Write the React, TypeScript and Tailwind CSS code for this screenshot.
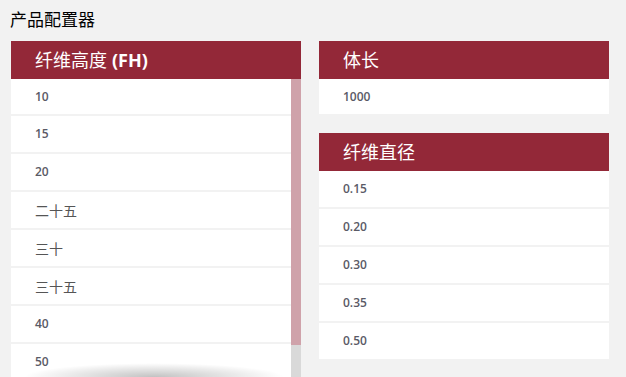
const heights = ["10", "15", "20", "二十五", "三十", "三十五", "40", "50"];
const lengths = ["1000"];
const diameters = ["0.15", "0.20", "0.30", "0.35", "0.50"];

const isCjk = (s: string) => /[\u4e00-\u9fff]/.test(s);

function Row({ label, short }: { label: string; short?: boolean }) {
  return (
    <div
      className={
        (short ? "h-[35px]" : "h-[36px]") +
        " bg-white flex items-center pl-[24px] shrink-0"
      }
    >
      {isCjk(label) ? (
        <span className="text-[14px] text-[#555555]">{label}</span>
      ) : (
        <span className="text-[12px] font-semibold text-[#5a5a66] font-['Open_Sans','Noto_Sans',sans-serif]">
          {label}
        </span>
      )}
    </div>
  );
}

function Header({ children }: { children: React.ReactNode }) {
  return (
    <div className="h-[38px] bg-[#932838] text-white text-[18px] flex items-center pl-[24px]">
      {children}
    </div>
  );
}

const App = () => {
  return (
    <main className="w-[626px] h-[377px] overflow-hidden bg-[#f2f2f2] px-[10px] pt-[8px] font-['Noto_Sans','Noto_Sans_CJK_SC',sans-serif]">
      <h1 className="text-[17px] leading-[24px] text-black">产品配置器</h1>
      <div className="mt-[9px] ml-[1px] flex gap-[18px] items-start">
        {/* left column */}
        <section className="w-[290px]">
          <Header>
            纤维高度 <span className="font-bold ml-[5px]">(FH)</span>
          </Header>
          <div className="relative flex h-[340px] overflow-hidden">
            <div className="flex-1 flex flex-col gap-[2px]">
              {heights.map((h, i) => (
                <Row key={h} label={h} short={i === 0} />
              ))}
            </div>
            <div className="w-[10px] bg-[#d9d9d9] flex flex-col">
              <div className="h-[266px] bg-[#cfa2aa]" />
            </div>
            <div className="absolute left-[12px] top-[284px] w-[262px] h-[28px] bg-[radial-gradient(ellipse_at_center,rgba(0,0,0,0.24),rgba(0,0,0,0)_70%)]" />
          </div>
        </section>
        {/* right column */}
        <div className="w-[290px] flex flex-col gap-[19px]">
          <section>
            <Header>体长</Header>
            {lengths.map((l) => (
              <Row key={l} label={l} short />
            ))}
          </section>
          <section>
            <Header>纤维直径</Header>
            <div className="flex flex-col gap-[2px]">
              {diameters.map((d) => (
                <Row key={d} label={d} />
              ))}
            </div>
          </section>
        </div>
      </div>
    </main>
  );
};

export default App;
